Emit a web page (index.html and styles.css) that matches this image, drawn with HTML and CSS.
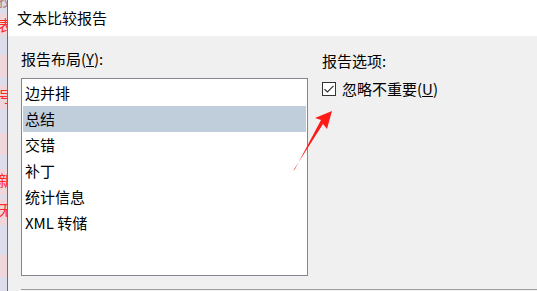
FILE: index.html
```html
<!DOCTYPE html>
<html lang="zh">
<head>
<meta charset="utf-8">
<title>文本比较报告</title>
<link rel="stylesheet" href="styles.css">
</head>
<body>
<div class="screen">
  <div class="behind">
    <div class="band lav h14"><span class="frag gray">技</span></div>
    <div class="band pink h22"><span class="frag">表</span></div>
    <div class="band lav h19"></div>
    <div class="band pink h22"></div>
    <div class="band lav h8"></div>
    <div class="band pink h24"><span class="frag">号</span></div>
    <div class="band lav h24"></div>
    <div class="band pink h22"></div>
    <div class="band lav h14"></div>
    <div class="band pink h26"><span class="frag">新</span></div>
    <div class="band lav h4"></div>
    <div class="band pink h26"><span class="frag">无</span></div>
    <div class="band lav h30"></div>
    <div class="band pink h22"></div>
    <div class="band lav h14"></div>
  </div>
  <div class="dialog">
    <div class="titlebar">文本比较报告</div>
    <div class="content">
      <div class="cols">
        <div class="col-left">
          <div class="label">报告布局(<u>Y</u>):</div>
          <div class="listbox">
            <div class="item">边并排</div>
            <div class="item selected">总结</div>
            <div class="item">交错</div>
            <div class="item">补丁</div>
            <div class="item">统计信息</div>
            <div class="item">XML 转储</div>
          </div>
        </div>
        <div class="col-right">
          <div class="label">报告选项:</div>
          <label class="check">
            <span class="box">
              <svg width="12" height="12" viewBox="0 0 12 12"><path d="M1.5 6.2 L4.5 9 L10.5 2.8" fill="none" stroke="#333" stroke-width="1.2"/></svg>
            </span>
            <span>忽略不重要(<u>U</u>)</span>
          </label>
        </div>
      </div>
      <div class="rule"></div>
      <svg class="arrow" width="60" height="80" viewBox="0 0 60 80">
        <path d="M52 15 L35 22 L41 24 L15 73 L13 75 L43 28 L47 33 Z" fill="#ff1a1a"/>
      </svg>
    </div>
  </div>
</div>
</body>
</html>
```

FILE: styles.css
```css
html, body {
  margin: 0;
  padding: 0;
}
body {
  width: 537px;
  height: 291px;
  overflow: hidden;
  background: #f0f0f0;
  font-family: "Noto Sans CJK SC", "Noto Sans", sans-serif;
  color: #000;
}
.screen {
  display: flex;
  width: 537px;
  height: 291px;
}
.behind {
  width: 7px;
  flex: none;
  overflow: hidden;
  border-right: 1px solid #6e6e7a;
  display: flex;
  flex-direction: column;
}
.band {
  flex: none;
  overflow: hidden;
  position: relative;
}
.lav { background: #dcdcea; }
.pink { background: #efd6da; }
.h4 { height: 4px; }
.h8 { height: 8px; }
.h14 { height: 14px; }
.h19 { height: 19px; }
.h22 { height: 22px; }
.h24 { height: 24px; }
.h26 { height: 26px; }
.h30 { height: 30px; }
.frag {
  display: block;
  margin-left: -2px;
  font-size: 15px;
  line-height: 22px;
  color: #ff2a2a;
  white-space: nowrap;
}
.frag.gray {
  color: #b08080;
  line-height: 8px;
  margin-top: -4px;
}
.dialog {
  flex: 1;
  display: flex;
  flex-direction: column;
  min-width: 0;
}
.titlebar {
  height: 36px;
  background: #fff;
  font-size: 15px;
  line-height: 36px;
  padding-left: 9px;
}
.content {
  position: relative;
  flex: 1;
  padding-left: 13px;
}
.cols {
  display: flex;
  gap: 14px;
}
.col-left {
  width: 287px;
  flex: none;
}
.label {
  font-size: 15px;
  line-height: 20px;
  padding-top: 13px;
  margin-bottom: 9px;
  white-space: nowrap;
}
.col-right .label {
  padding-top: 15px;
  margin-bottom: 8px;
}
.listbox {
  height: 196px;
  border: 1px solid #828790;
  background: #fff;
  padding-top: 1px;
  box-sizing: content-box;
  height: 195px;
}
.item {
  height: 26px;
  line-height: 26px;
  font-size: 15px;
  padding-left: 2px;
  margin: 0 1px;
  white-space: nowrap;
}
.item.selected {
  background: #c0cddb;
}
.check {
  display: flex;
  align-items: center;
  gap: 6px;
  font-size: 15px;
  line-height: 20px;
}
.box {
  width: 14px;
  height: 14px;
  border: 1px solid #333;
  background: #fff;
  box-sizing: border-box;
  display: flex;
  align-items: center;
  justify-content: center;
}
.rule {
  margin-top: 13px;
  height: 1px;
  background: #a0a0a0;
}
.arrow {
  position: absolute;
  left: 272px;
  top: 60px;
}
```
